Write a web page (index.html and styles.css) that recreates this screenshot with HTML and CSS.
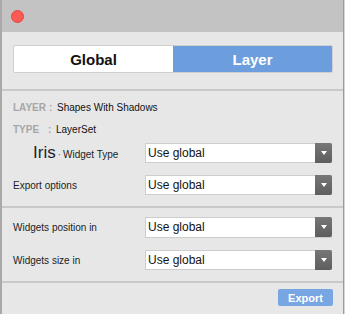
FILE: index.html
```html
<!DOCTYPE html>
<html>
<head>
<meta charset="utf-8">
<link rel="stylesheet" href="styles.css">
</head>
<body>
<div class="window">
  <div class="titlebar"><span class="close"></span></div>
  <div class="section top">
    <div class="segment">
      <div class="seg seg-off">Global</div>
      <div class="seg seg-on">Layer</div>
    </div>
  </div>
  <div class="section info">
    <div class="meta"><span class="key">LAYER</span><span class="colon">:</span><span class="val">Shapes With Shadows</span></div>
    <div class="meta meta2"><span class="key key-type">TYPE</span><span class="colon">:</span><span class="val">LayerSet</span></div>
    <div class="row row-iris">
      <div class="label"><span class="iris">Iris</span><span class="dot">·</span><span class="wt">Widget Type</span></div>
      <div class="select"><span class="sel-text">Use global</span><span class="arrow"></span></div>
    </div>
    <div class="row row-export">
      <div class="label">Export options</div>
      <div class="select"><span class="sel-text">Use global</span><span class="arrow"></span></div>
    </div>
  </div>
  <div class="section widgets">
    <div class="row">
      <div class="label">Widgets position in</div>
      <div class="select"><span class="sel-text">Use global</span><span class="arrow"></span></div>
    </div>
    <div class="row">
      <div class="label">Widgets size in</div>
      <div class="select"><span class="sel-text">Use global</span><span class="arrow"></span></div>
    </div>
  </div>
  <div class="section footer">
    <div class="export">Export</div>
  </div>
</div>
</body>
</html>
```
FILE: styles.css
```css
* { box-sizing: border-box; }
html, body {
  margin: 0;
  padding: 0;
  background: #d6d6d6;
  font-family: "Liberation Sans", Arial, sans-serif;
}
.window {
  width: 344px;
  height: 314px;
  display: flex;
  flex-direction: column;
  background: #e7e7e7;
  border-left: 2px solid #a9a9a9;
  border-right: 1px solid #9c9c9c;
}
.titlebar {
  height: 32px;
  background: #c3c3c3;
  padding: 10px 0 0 9px;
  flex: none;
}
.close {
  display: block;
  width: 13px;
  height: 13px;
  border-radius: 50%;
  background: #fc5a55;
  border: 1px solid #e2463f;
}
.section {
  flex: none;
}
.top {
  height: 59px;
  padding: 13px 10px 0 11px;
  border-bottom: 2px solid #c9c9c9;
}
.segment {
  display: flex;
  height: 28px;
  border: 1px solid #cfcfcf;
  border-radius: 2px;
  overflow: hidden;
}
.seg {
  flex: 1;
  display: flex;
  align-items: center;
  justify-content: center;
  font-size: 15px;
  font-weight: bold;
}
.seg-off { background: #ffffff; color: #111; }
.seg-on { background: #6c9edd; color: #ffffff; }
.info {
  height: 117px;
  padding: 10px 11px 0 11px;
  border-bottom: 2px solid #c9c9c9;
}
.meta {
  font-size: 10px;
  height: 13px;
  line-height: 13px;
  color: #111;
  display: flex;
}
.meta2 { margin-top: 9px; }
.key {
  color: #a6a6a6;
  font-weight: bold;
  width: 36px;
}
.colon {
  color: #a6a6a6;
  font-weight: bold;
  width: 7px;
}
.key-type { width: 35px; }
.val { margin-left: 1px; }
.row {
  display: flex;
  align-items: center;
  height: 20px;
  margin-top: 11px;
}
.row-iris { margin-top: 7px; }
.row-export { margin-top: 12px; }
.label {
  width: 132px;
  font-size: 10px;
  color: #1a1d26;
  display: flex;
  align-items: baseline;
}
.iris {
  font-size: 17px;
  margin-left: 20px;
  color: #1f2330;
}
.dot { margin: 0 2px 0 2px; color: #666; }
.select {
  width: 187px;
  height: 20px;
  background: #ffffff;
  border: 1px solid #cdcdcd;
  display: flex;
  align-items: center;
  justify-content: space-between;
}
.sel-text {
  font-size: 12px;
  color: #111;
  padding-left: 2px;
}
.arrow {
  width: 17px;
  height: 20px;
  margin-right: -1px;
  background: linear-gradient(#777, #5e5e5e);
  border-radius: 0 2px 2px 0;
  position: relative;
}
.arrow::after {
  content: "";
  position: absolute;
  left: 6px;
  top: 8px;
  border-left: 3px solid transparent;
  border-right: 3px solid transparent;
  border-top: 4px solid #ffffff;
}
.widgets {
  height: 75px;
  padding: 0 11px;
  border-bottom: 2px solid #c9c9c9;
}
.widgets .row:first-child { margin-top: 9px; }
.widgets .row:first-child .select { height: 21px; }
.widgets .row + .row { margin-top: 13px; }
.footer {
  flex: 1;
  display: flex;
  justify-content: flex-end;
  align-items: flex-start;
  padding: 6px 10px 0 0;
}
.export {
  width: 55px;
  height: 17px;
  background: #78a6e2;
  border-radius: 2px;
  color: #fff;
  font-weight: bold;
  font-size: 11px;
  display: flex;
  align-items: center;
  justify-content: center;
}
```
